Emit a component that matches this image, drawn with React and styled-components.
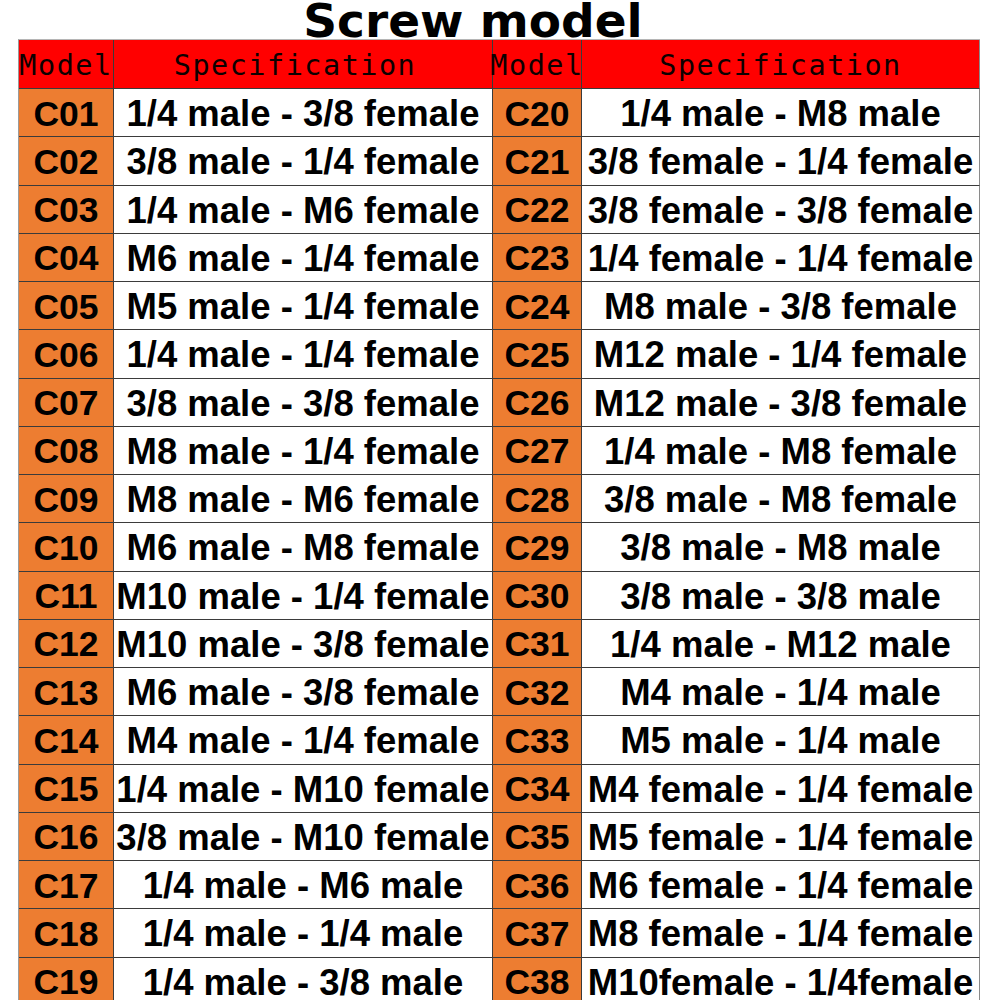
import React from "react";
import styled, { createGlobalStyle } from "styled-components";

const Global = createGlobalStyle`
  html, body { margin: 0; padding: 0; background: #ffffff; overflow: hidden; }
  body { font-family: "Liberation Sans", Arial, sans-serif; }
`;

const Page = styled.div`
  width: 1000px;
  height: 1000px;
  overflow: hidden;
  padding-left: 18px;
  box-sizing: border-box;
`;

const Title = styled.h1`
  margin: 0;
  width: 962px;
  padding-right: 52px;
  box-sizing: border-box;
  height: 39px;
  line-height: 42px;
  text-align: center;
  font-family: "DejaVu Sans", "Liberation Sans", sans-serif;
  font-weight: 700;
  font-size: 47px;
  color: #000;
  white-space: nowrap;
`;

const Table = styled.div`
  display: grid;
  width: 962px;
  box-sizing: border-box;
  grid-template-columns: 95px 379px 89px 398px;
  grid-template-rows: 49px repeat(19, 48.25px);
  border-left: 1px solid #9a9a9a;
  border-top: 1px solid #b5b5b5;
`;

const Cell = styled.div`
  box-sizing: border-box;
  display: flex;
  align-items: center;
  justify-content: center;
  overflow: visible;
  white-space: nowrap;
  border-right: 1px solid ${(p) => (p.$last ? "#8a8a8a" : "#3b3b3b")};
  border-bottom: 1px solid #3b3b3b;
`;

const HeadCell = styled(Cell)`
  background: #ff0000;
  font-family: "DejaVu Sans Mono", "Liberation Mono", monospace;
  font-size: 28.5px;
  letter-spacing: 1.5px;
  font-weight: 400;
  color: #0d0000;
  padding-top: 3px;
  padding-right: ${(p) => p.$shift || 0}px;
`;

const ModelCell = styled(Cell)`
  background: #ed7d31;
  font-family: "Liberation Sans", Arial, sans-serif;
  font-weight: 700;
  font-size: 35.5px;
  color: #000;
  padding-top: 3px;
`;

const SpecCell = styled(Cell)`
  background: #ffffff;
  font-family: "Liberation Sans", Arial, sans-serif;
  font-weight: 700;
  font-size: 36.5px;
  color: #000;
  padding-top: 3px;
`;

const left = [
  ["C01", "1/4 male - 3/8 female"],
  ["C02", "3/8 male - 1/4 female"],
  ["C03", "1/4 male - M6 female"],
  ["C04", "M6 male - 1/4 female"],
  ["C05", "M5 male - 1/4 female"],
  ["C06", "1/4 male - 1/4 female"],
  ["C07", "3/8 male - 3/8 female"],
  ["C08", "M8 male - 1/4 female"],
  ["C09", "M8 male - M6 female"],
  ["C10", "M6 male - M8 female"],
  ["C11", "M10 male - 1/4 female"],
  ["C12", "M10 male - 3/8 female"],
  ["C13", "M6 male - 3/8 female"],
  ["C14", "M4 male - 1/4 female"],
  ["C15", "1/4 male - M10 female"],
  ["C16", "3/8 male - M10 female"],
  ["C17", "1/4 male - M6 male"],
  ["C18", "1/4 male - 1/4 male"],
  ["C19", "1/4 male - 3/8 male"],
];

const right = [
  ["C20", "1/4 male - M8 male"],
  ["C21", "3/8 female - 1/4 female"],
  ["C22", "3/8 female - 3/8 female"],
  ["C23", "1/4 female - 1/4 female"],
  ["C24", "M8 male - 3/8 female"],
  ["C25", "M12 male - 1/4 female"],
  ["C26", "M12 male - 3/8 female"],
  ["C27", "1/4 male - M8 female"],
  ["C28", "3/8 male - M8 female"],
  ["C29", "3/8 male - M8 male"],
  ["C30", "3/8 male - 3/8 male"],
  ["C31", "1/4 male - M12 male"],
  ["C32", "M4 male - 1/4 male"],
  ["C33", "M5 male - 1/4 male"],
  ["C34", "M4 female - 1/4 female"],
  ["C35", "M5 female - 1/4 female"],
  ["C36", "M6 female - 1/4 female"],
  ["C37", "M8 female - 1/4 female"],
  ["C38", "M10female - 1/4female"],
];

export default function App() {
  return (
    <Page>
      <Global />
      <Title>Screw model</Title>
      <Table>
        <HeadCell>Model</HeadCell>
        <HeadCell $shift={16}>Specification</HeadCell>
        <HeadCell>Model</HeadCell>
        <HeadCell $last>Specification</HeadCell>
        {left.map((row, i) => (
          <React.Fragment key={row[0]}>
            <ModelCell>{row[0]}</ModelCell>
            <SpecCell>{row[1]}</SpecCell>
            <ModelCell>{right[i][0]}</ModelCell>
            <SpecCell $last>{right[i][1]}</SpecCell>
          </React.Fragment>
        ))}
      </Table>
    </Page>
  );
}
